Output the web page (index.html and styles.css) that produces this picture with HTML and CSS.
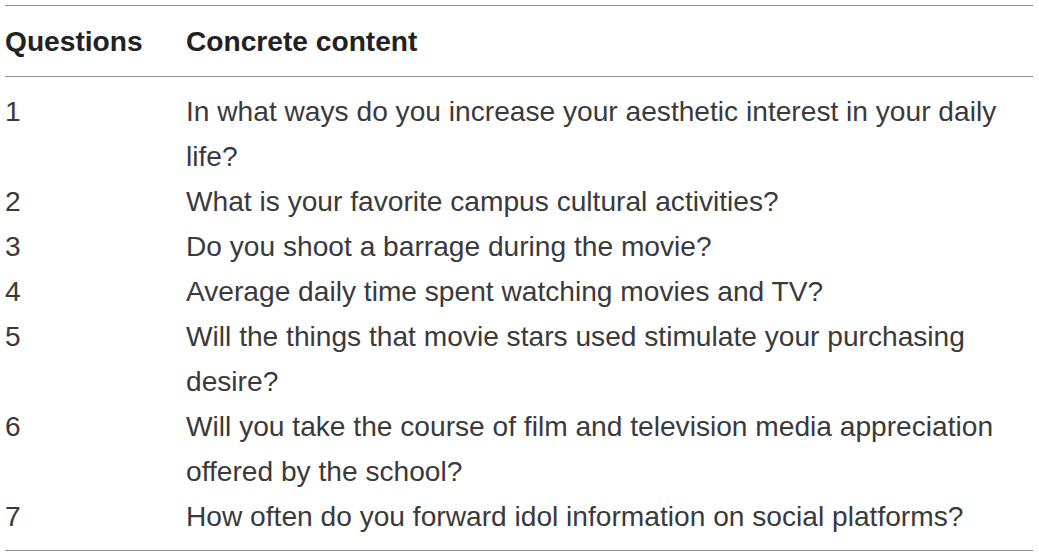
FILE: index.html
```html
<!DOCTYPE html>
<html lang="en">
<head>
<meta charset="utf-8">
<title>Questions</title>
<link rel="stylesheet" href="styles.css">
</head>
<body>
<div class="wrap">
  <table class="qtable">
    <thead>
      <tr>
        <th class="col-num">Questions</th>
        <th class="col-text">Concrete content</th>
      </tr>
    </thead>
    <tbody>
      <tr><td class="col-num">1</td><td class="col-text">In what ways do you increase your aesthetic interest in your daily life?</td></tr>
      <tr><td class="col-num">2</td><td class="col-text">What is your favorite campus cultural activities?</td></tr>
      <tr><td class="col-num">3</td><td class="col-text">Do you shoot a barrage during the movie?</td></tr>
      <tr><td class="col-num">4</td><td class="col-text">Average daily time spent watching movies and TV?</td></tr>
      <tr><td class="col-num">5</td><td class="col-text">Will the things that movie stars used stimulate your purchasing desire?</td></tr>
      <tr><td class="col-num">6</td><td class="col-text">Will you take the course of film and television media appreciation offered by the school?</td></tr>
      <tr><td class="col-num">7</td><td class="col-text">How often do you forward idol information on social platforms?</td></tr>
    </tbody>
  </table>
</div>
</body>
</html>
```

FILE: styles.css
```css
html, body {
  margin: 0;
  padding: 0;
  background: #ffffff;
}

.wrap {
  padding: 5px 6px 0 5px;
}

.qtable {
  width: 1028px;
  border-collapse: collapse;
  table-layout: fixed;
  font-family: "Liberation Sans", Arial, Helvetica, sans-serif;
  font-size: 28.15px;
  line-height: 45px;
  color: #3a3a3a;
}

.qtable th {
  text-align: left;
  font-weight: bold;
  color: #222222;
  padding: 13px 0 12px 0;
  border-top: 1px solid #8f8f8f;
  border-bottom: 1px solid #8f8f8f;
  vertical-align: middle;
}

.qtable td {
  padding: 0;
  vertical-align: top;
}

.qtable tbody tr:first-child td {
  padding-top: 12px;
}

.qtable tbody tr:last-child td {
  padding-bottom: 11px;
  border-bottom: 1px solid #8f8f8f;
}

.qtable .col-num {
  width: 181px;
}
```
